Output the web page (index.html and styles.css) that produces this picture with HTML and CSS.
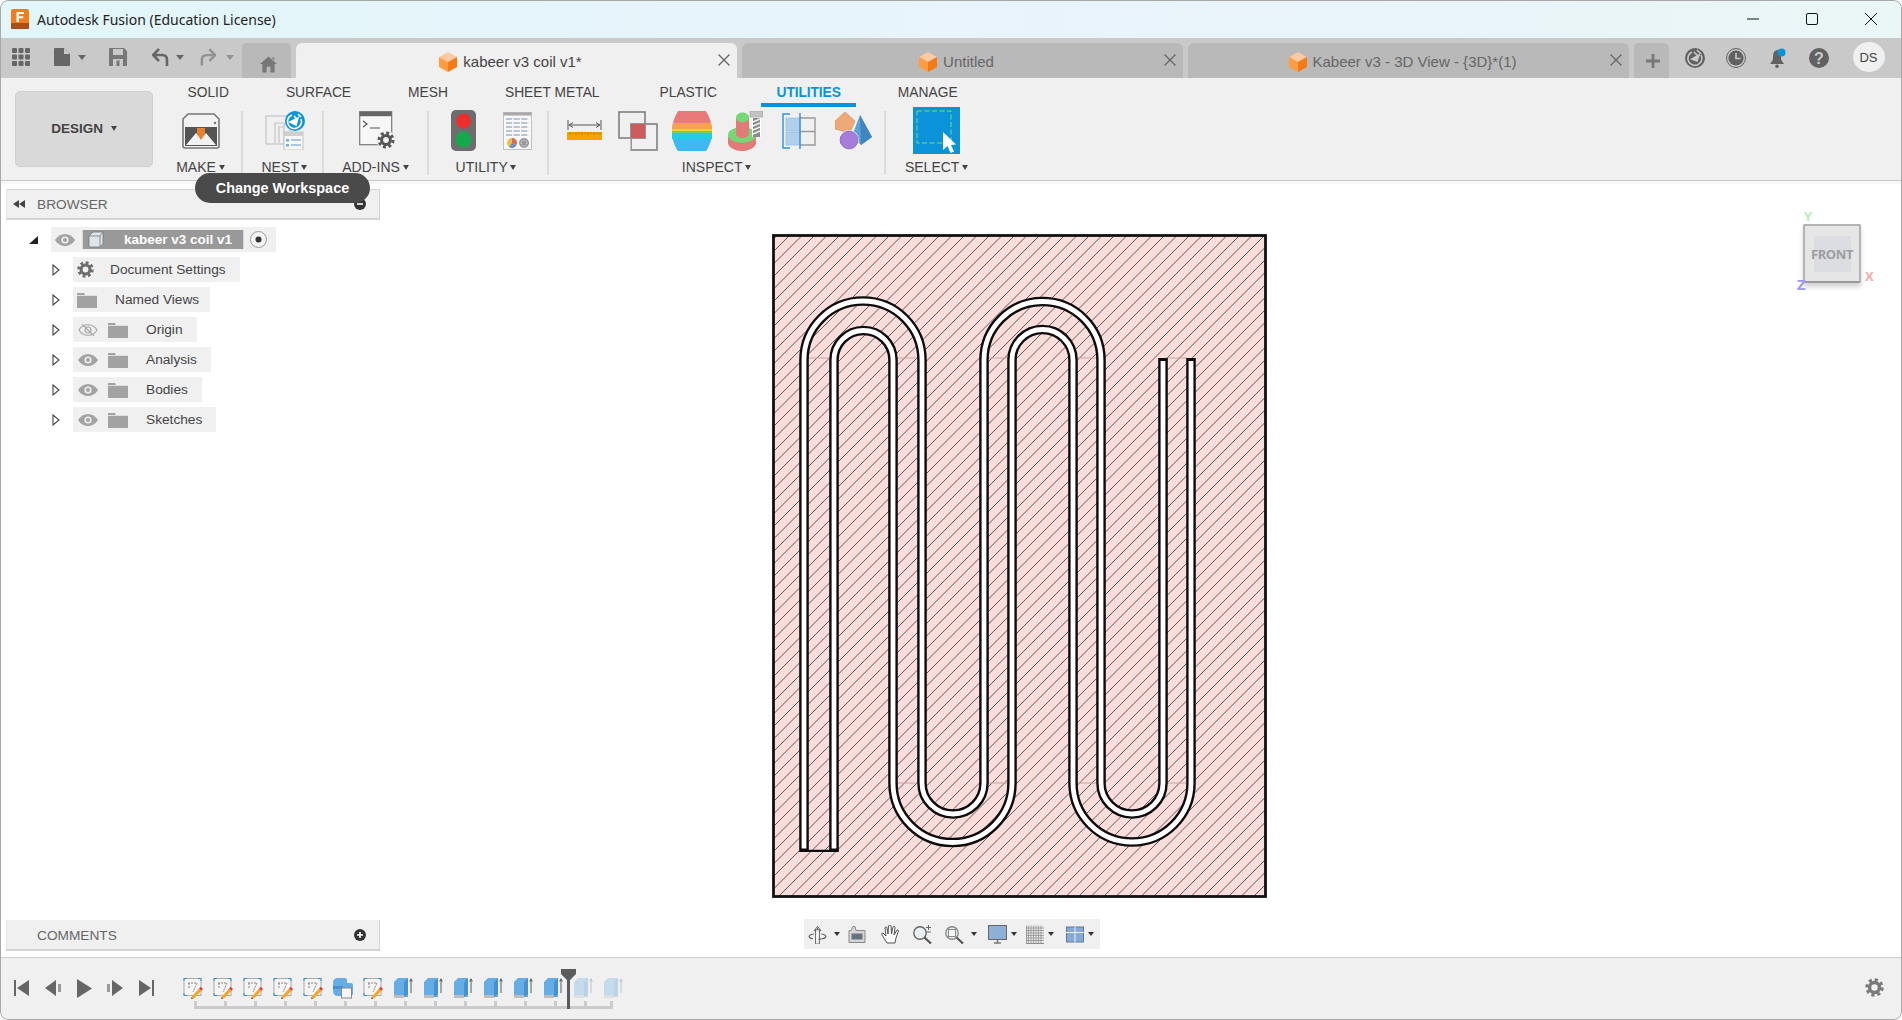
FILE: index.html
```html
<!DOCTYPE html>
<html lang="en">
<head>
<meta charset="utf-8">
<title>Autodesk Fusion</title>
<link rel="stylesheet" href="styles.css">
</head>
<body>
<svg class="defs" width="0" height="0" aria-hidden="true">
  <defs>
    <symbol id="cube" viewBox="0 0 18 20">
      <polygon points="9,0 18,5 9,10 0,5" fill="#fdc9a0"/>
      <polygon points="0,5 9,10 9,20 0,15" fill="#ff9d45"/>
      <polygon points="18,5 9,10 9,20 18,15" fill="#f57a14"/>
    </symbol>
    <symbol id="eye" viewBox="0 0 20 12">
      <path d="M0,6 C5,-2 15,-2 20,6 C15,14 5,14 0,6Z" fill="#a3a3a3"/>
      <circle cx="10" cy="6" r="3.6" fill="#f0f0f0"/>
      <circle cx="10" cy="6" r="2" fill="#a3a3a3"/>
    </symbol>
    <symbol id="eye-off" viewBox="0 0 20 12">
      <path d="M1,6 C5,-1 15,-1 19,6 C15,13 5,13 1,6Z" fill="none" stroke="#a8a8a8" stroke-width="1.2"/>
      <circle cx="10" cy="6" r="3" fill="none" stroke="#a8a8a8" stroke-width="1.2"/>
      <path d="M4,0 L16,12" stroke="#a8a8a8" stroke-width="1.2"/>
    </symbol>
    <symbol id="folder" viewBox="0 0 20 16">
      <path d="M0,1 H7 L8,3 H20 V16 H0Z" fill="#a2a2a2"/>
      <path d="M0,3.5 H20" stroke="#f0f0f0" stroke-width=".8"/>
    </symbol>
    <symbol id="expander" viewBox="0 0 8 12">
      <polygon points="1,1 7,6 1,11" fill="#fff" stroke="#444" stroke-width="1.1"/>
    </symbol>
    <symbol id="gear" viewBox="0 0 20 20">
      <circle cx="10" cy="10" r="5.2" fill="none" stroke="currentColor" stroke-width="3.6"/>
      <circle cx="10" cy="10" r="8" fill="none" stroke="currentColor" stroke-width="3.4" stroke-dasharray="3.3 2.98"/>
    </symbol>
    <symbol id="sketch" viewBox="0 0 20 22">
      <rect x="1" y="1.5" width="17" height="17" fill="#f5f5f5" stroke="#999" stroke-width=".8"/>
      <path d="M1,4 V1.5 H4 M15,1.5 H18 V4 M1,16 V18.5 H4" fill="none" stroke="#2c8fdc" stroke-width="1"/>
      <path d="M5,6 H14 L10,15 M6,6 V12" fill="none" stroke="#6a6a6a" stroke-width=".8" stroke-dasharray="2 1"/>
      <path d="M8.5,20 L16,11.5 L18.5,13.8 L11,21.5Z" fill="#f5a623"/>
      <path d="M16,11.5 L17.5,9.8 L20,12 L18.5,13.8Z" fill="#e8393a"/>
      <path d="M8.5,20 L8,22 L10.5,21.4Z" fill="#555"/>
    </symbol>
    <symbol id="extrude" viewBox="0 0 20 22">
      <path d="M1,5 L5,1 H15 V20 H1Z" fill="#66ade6"/>
      <path d="M11,5 L15,1 V17 L11,20Z" fill="#4492cf"/>
      <path d="M1,18 H11 V21 H1Z" fill="#bdbdbd"/>
      <path d="M18,16 V3 M16.7,4.5 L18,1.8 L19.3,4.5" fill="none" stroke="#333" stroke-width=".8"/>
    </symbol>
    <pattern id="hatch" patternUnits="userSpaceOnUse" width="25" height="25">
      <rect width="25" height="25" fill="#fddcdc"/>
      <path d="M-1,1 L1,-1 M-1,13.5 L13.5,-1 M-1,26 L26,-1 M11.5,26 L26,11.5 M24,26 L26,24" stroke="#4a4a4a" stroke-width=".9"/>
    </pattern>
  </defs>
</svg>

<div class="window">
  <header class="titlebar">
    <svg class="app-logo" viewBox="0 0 18 20">
      <rect width="18" height="20" rx="2" fill="#f47b20"/>
      <rect y="14" width="18" height="6" fill="#a6521a"/>
      <path d="M5.5,3 H13 V5 H8 V7.2 H12.3 V9.2 H8 V13 H5.5Z" fill="#fff"/>
    </svg>
    <span class="app-title">Autodesk Fusion (Education License)</span>
    <div class="win-controls">
      <svg class="win-btn" viewBox="0 0 12 12"><path d="M0,6 H12" stroke="#111" stroke-width="1"/></svg>
      <svg class="win-btn" viewBox="0 0 12 12"><rect x=".5" y=".5" width="11" height="11" rx="1.5" fill="none" stroke="#111" stroke-width="1"/></svg>
      <svg class="win-btn" viewBox="0 0 12 12"><path d="M0,0 L12,12 M12,0 L0,12" stroke="#111" stroke-width="1"/></svg>
    </div>
  </header>

  <nav class="tabbar">
    <div class="qat">
      <svg class="qi qi-grid" viewBox="0 0 18 18"><g fill="#666"><rect width="5" height="5" rx="1"/><rect x="6.5" width="5" height="5" rx="1"/><rect x="13" width="5" height="5" rx="1"/><rect y="6.5" width="5" height="5" rx="1"/><rect x="6.5" y="6.5" width="5" height="5" rx="1"/><rect x="13" y="6.5" width="5" height="5" rx="1"/><rect y="13" width="5" height="5" rx="1"/><rect x="6.5" y="13" width="5" height="5" rx="1"/><rect x="13" y="13" width="5" height="5" rx="1"/></g></svg>
      <svg class="qi qi-file" viewBox="0 0 16 18"><path d="M1,0 H10 L16,6 V17 Q16,18 15,18 H1 Q0,18 0,17 V1 Q0,0 1,0Z" fill="#666"/><path d="M10,0 V6 H16" fill="#c9c9c9"/></svg>
      <i class="caret caret-file"></i>
      <svg class="qi qi-save" viewBox="0 0 18 18"><path d="M1,0 H15 L18,3 V17 Q18,18 17,18 H1 Q0,18 0,17 V1 Q0,0 1,0Z" fill="#777"/><rect x="4" y="1" width="10" height="6" fill="#c9c9c9"/><rect x="4" y="11" width="10" height="7" fill="#c9c9c9"/><rect x="7.5" y="12.5" width="3" height="5.5" fill="#777"/></svg>
      <svg class="qi qi-undo" viewBox="0 0 17 18"><path d="M7,1 L1,7 L7,13 M2,7 H10 Q15,7 15,12 V18" fill="none" stroke="#666" stroke-width="2.6"/></svg>
      <i class="caret caret-undo"></i>
      <svg class="qi qi-redo" viewBox="0 0 17 18"><path d="M10,1 L16,7 L10,13 M15,7 H7 Q2,7 2,12 V18" fill="none" stroke="#929292" stroke-width="2.6"/></svg>
      <i class="caret caret-redo"></i>
    </div>
    <div class="home-tab">
      <svg class="home-icon" viewBox="0 0 18 17"><path d="M9,0 L18,8 H15.5 V17 H11 V11 H7 V17 H2.5 V8 H0Z M13,1 H15 V4 L13,2.5Z" fill="#787878"/></svg>
    </div>
    <div class="tab tab-active">
      <svg class="tab-cube"><use href="#cube"/></svg>
      <span class="tab-title">kabeer v3 coil v1*</span>
      <svg class="tab-close" viewBox="0 0 12 12"><path d="M0.5,0.5 L11.5,11.5 M11.5,0.5 L0.5,11.5" stroke="#666" stroke-width="1.3"/></svg>
    </div>
    <div class="tab">
      <svg class="tab-cube"><use href="#cube"/></svg>
      <span class="tab-title">Untitled</span>
      <svg class="tab-close" viewBox="0 0 12 12"><path d="M0.5,0.5 L11.5,11.5 M11.5,0.5 L0.5,11.5" stroke="#666" stroke-width="1.3"/></svg>
    </div>
    <div class="tab">
      <svg class="tab-cube"><use href="#cube"/></svg>
      <span class="tab-title">Kabeer v3 - 3D View - {3D}*(1)</span>
      <svg class="tab-close" viewBox="0 0 12 12"><path d="M0.5,0.5 L11.5,11.5 M11.5,0.5 L0.5,11.5" stroke="#666" stroke-width="1.3"/></svg>
    </div>
    <div class="plus-tab">
      <svg class="plus-icon" viewBox="0 0 14 14"><path d="M7,0 V14 M0,7 H14" stroke="#787878" stroke-width="2.8"/></svg>
    </div>
    <div class="tray">
      <svg class="tray-icon" viewBox="0 0 20 20"><circle cx="10" cy="10" r="10" fill="#616161"/><path d="M7,4 A7,7 0 1 0 16,7" fill="none" stroke="#c9c9c9" stroke-width="1.6"/><path d="M9,4 L13,8 M12,2 L16,6 M7,11 L14,7 L12,13 Z" fill="#c9c9c9" stroke="#c9c9c9" stroke-width="1.6"/></svg>
      <svg class="tray-icon" viewBox="0 0 20 20"><circle cx="10" cy="10" r="9.5" fill="none" stroke="#616161" stroke-width="1"/><circle cx="10" cy="10" r="7.6" fill="#616161"/><path d="M10,5 V10.5 H14.5" fill="none" stroke="#c9c9c9" stroke-width="1.6"/></svg>
      <svg class="tray-icon" viewBox="0 0 20 20"><path d="M9,2 C5,3 5,7 5,10 C5,13 3,14 2,16 H16 C15,14 13,13 13,10 C13,7 13,3 9,2Z" fill="#616161"/><circle cx="9" cy="18.2" r="1.8" fill="#616161"/><circle cx="13.5" cy="4.5" r="4" fill="#0696d7"/></svg>
      <svg class="tray-icon" viewBox="0 0 20 20"><circle cx="10" cy="10" r="10" fill="#616161"/><text x="10" y="16" text-anchor="middle" class="help-mark">?</text></svg>
      <span class="avatar">DS</span>
    </div>
  </nav>

  <section class="ribbon">
    <button class="design-btn">DESIGN <i class="caret caret-dark"></i></button>
    <div class="ribbon-main">
      <div class="ribbon-tabs">
        <span class="rtab">SOLID</span>
        <span class="rtab">SURFACE</span>
        <span class="rtab">MESH</span>
        <span class="rtab">SHEET METAL</span>
        <span class="rtab rtab-plastic">PLASTIC</span>
        <span class="rtab rtab-active">UTILITIES</span>
        <span class="rtab">MANAGE</span>
      </div>
      <div class="panels">
        <div class="panel panel-make">
          <div class="panel-icons">
            <svg class="ic-make" viewBox="0 0 38 36">
              <path d="M6,1 H32 L37,6 V33 Q37,35 35,35 H3 Q1,35 1,33 V6Z" fill="#f2f2f2" stroke="#777" stroke-width="1.6"/>
              <rect x="3" y="14" width="32" height="19" fill="#555"/>
              <circle cx="33" cy="10" r="1.3" fill="#777"/>
              <path d="M4,32 L14,20 L19,25 L24,20 L34,32Z" fill="#f2f2f2"/>
              <path d="M15,15 H23 V21 L19,27 L15,21Z" fill="#e9802d"/>
            </svg>
          </div>
          <span class="panel-label">MAKE <i class="caret caret-sm"></i></span>
        </div>
        <div class="panel panel-nest">
          <div class="panel-icons">
            <svg class="ic-nest" viewBox="0 0 40 39">
              <rect x="1" y="5" width="24" height="28" fill="#f0f0f0" stroke="#c4c4c4" stroke-width="1.2"/>
              <path d="M10,32 V12 H19 V32 M14,32 V16 H18" fill="none" stroke="#c4c4c4" stroke-width="1.2"/>
              <rect x="19" y="21" width="19" height="18" fill="#f7f7f7" stroke="#c4c4c4" stroke-width="1"/>
              <rect x="19" y="21" width="19" height="4" fill="#cfcfcf"/>
              <path d="M26,29 H36 M26,34 H36" stroke="#a9c8e4" stroke-width="2"/>
              <rect x="21" y="28" width="3" height="2.5" fill="#76b0dc"/><rect x="21" y="33" width="3" height="2.5" fill="#76b0dc"/>
              <circle cx="30" cy="10" r="10" fill="#0a94dc"/>
              <path d="M27,4 A7,7 0 1 0 36,8" fill="none" stroke="#fff" stroke-width="1.6"/>
              <path d="M25,11 L33,7 L31,14Z M29,5 L32,8 M33,3 L36,6" fill="#fff" stroke="#fff" stroke-width="1.6"/>
            </svg>
          </div>
          <span class="panel-label">NEST <i class="caret caret-sm"></i></span>
        </div>
        <div class="panel panel-addins">
          <div class="panel-icons">
            <svg class="ic-addins" viewBox="0 0 37 39">
              <rect x=".7" y=".7" width="32" height="33" fill="#f7f7f7" stroke="#7a7a7a" stroke-width="1.2"/>
              <rect x=".7" y=".7" width="32" height="4.5" fill="#666"/>
              <path d="M4,10 L8,13 L4,16 M11,17 H21" fill="none" stroke="#555" stroke-width="1.2"/>
              <circle cx="27" cy="29" r="9.5" fill="#f0f0f0"/>
              <circle cx="27" cy="29" r="4.4" fill="none" stroke="#555" stroke-width="3"/>
              <circle cx="27" cy="29" r="7" fill="none" stroke="#555" stroke-width="3" stroke-dasharray="2.9 2.6"/>
            </svg>
          </div>
          <span class="panel-label">ADD-INS <i class="caret caret-sm"></i></span>
        </div>
        <div class="panel panel-utility">
          <div class="panel-icons">
            <svg class="ic-traffic" viewBox="0 0 25 41">
              <rect width="25" height="41" rx="5" fill="#6d6d6d"/>
              <circle cx="12.5" cy="11" r="7.5" fill="#ee2d2d"/>
              <circle cx="12.5" cy="29.5" r="8" fill="#13a94c"/>
            </svg>
            <svg class="ic-table" viewBox="0 0 29 38">
              <rect x=".5" y=".5" width="28" height="37" fill="#f8f8f8" stroke="#c0c0c0"/>
              <rect x=".5" y=".5" width="28" height="3" fill="#a8a8a8"/>
              <path d="M3,7 H26 M3,11 H26 M3,15 H26 M3,19 H26 M3,23 H26" stroke="#b9c4d4" stroke-width="2.2" stroke-dasharray="6.2 1.4"/>
              <circle cx="9" cy="31" r="5" fill="#e8c14a"/>
              <path d="M9,31 V26 A5,5 0 0 1 13.5,33Z" fill="#d56b5f"/>
              <path d="M9,31 L13.5,33 A5,5 0 0 1 6,35Z" fill="#6c8fc8"/>
              <circle cx="21" cy="31" r="5" fill="#999"/>
              <circle cx="21" cy="31" r="3" fill="none" stroke="#eee" stroke-width="1" stroke-dasharray="1 1"/>
            </svg>
          </div>
          <span class="panel-label">UTILITY <i class="caret caret-sm"></i></span>
        </div>
        <div class="panel panel-inspect">
          <div class="panel-icons">
            <svg class="ic-ruler" viewBox="0 0 35 20">
              <path d="M1,0 V10 M34,0 V10" stroke="#555" stroke-width="1"/>
              <path d="M2,5 H33 M6,2.5 L2,5 L6,7.5 M29,2.5 L33,5 L29,7.5" fill="none" stroke="#555" stroke-width="1"/>
              <rect y="12" width="35" height="8" fill="#f5a300"/>
              <path d="M3,12 V15 M6,12 V14 M9,12 V15 M12,12 V14 M15,12 V15 M18,12 V14 M21,12 V15 M24,12 V14 M27,12 V15 M30,12 V14 M33,12 V15" stroke="#a87000" stroke-width=".8"/>
            </svg>
            <svg class="ic-combine" viewBox="0 0 40 40">
              <rect x="1" y="1" width="26" height="26" fill="none" stroke="#777" stroke-width="1.5"/>
              <rect x="13" y="13" width="26" height="26" fill="none" stroke="#8c8c8c" stroke-width="1.8"/>
              <rect x="13" y="13" width="14" height="14" fill="#cd5c5c"/>
              <rect x="11.5" y="27.5" width="1" height="12" fill="#f0f0f0"/>
            </svg>
            <svg class="ic-zebra" viewBox="0 0 40 40">
              <path d="M6,0 H34 Q40,10 40,20 Q40,30 34,40 H6 Q0,30 0,20 Q0,10 6,0Z" fill="#e97a7a"/>
              <path d="M1,12 H39 Q39.6,15 39.8,18 H.2 Q.4,15 1,12Z" fill="#f7a445"/>
              <rect y="18" width="40" height="2" fill="#e2d83a"/>
              <rect y="20" width="40" height="2" fill="#6fce6a"/>
              <rect y="22" width="40" height="6" fill="#1fd0e0"/>
              <path d="M.7,28 H39.3 Q38,34 34,40 H6 Q2,34 .7,28Z" fill="#3db9f5"/>
            </svg>
            <svg class="ic-drill" viewBox="0 0 35 40">
              <ellipse cx="14" cy="31" rx="14" ry="9" fill="#e27a78"/>
              <ellipse cx="14" cy="24" rx="14" ry="8" fill="#75d874"/>
              <path d="M0,24 V31 A14,9 0 0 0 28,31 V24 A14,8 0 0 1 0,24Z" fill="#e27a78"/>
              <path d="M8,6 V23 A6.5,4 0 0 0 21,23 V6Z" fill="#e27a78"/>
              <ellipse cx="14.5" cy="6.5" rx="6.5" ry="5" fill="#75d874"/>
              <rect x="24" y="5" width="9" height="21" fill="#fff"/>
              <rect x="25" y="7" width="7" height="19" fill="#8a8a8a"/>
              <path d="M25,11 L32,8 M25,15 L32,12 M25,19 L32,16 M25,23 L32,20" stroke="#eee" stroke-width="1.5"/>
              <rect x="22" y="0" width="13" height="6" fill="#c4c4c4" stroke="#999" stroke-width=".6"/>
            </svg>
            <svg class="ic-section" viewBox="0 0 34 36">
              <path d="M8,1 H1 V35 H8" fill="none" stroke="#2b92dc" stroke-width="1.4"/>
              <rect x="4" y="5" width="14" height="13" fill="#b0d0ec" stroke="#8db8dc" stroke-width=".6"/>
              <rect x="4" y="19" width="14" height="13" fill="#b0d0ec" stroke="#8db8dc" stroke-width=".6"/>
              <path d="M18,5 H33 V32 H18 M18,18.5 H33" fill="none" stroke="#999" stroke-width="1.4"/>
              <path d="M18,0 V36" stroke="#2b92dc" stroke-width="1.4"/>
            </svg>
            <svg class="ic-shapes" viewBox="0 0 37 38">
              <polygon points="10,0 20,9 15,21 0,17 0,9" fill="#edaa78" stroke="#cf8a58" stroke-width=".6"/>
              <polygon points="25,3 37,25 26,33 17,24" fill="#5ba2d8"/>
              <polygon points="25,3 37,25 26,33" fill="#4085bd"/>
              <circle cx="14" cy="28" r="10" fill="#fff"/>
              <circle cx="14" cy="28" r="9" fill="#a77ddc" stroke="#8a5eb8" stroke-width=".8"/>
            </svg>
          </div>
          <span class="panel-label">INSPECT <i class="caret caret-sm"></i></span>
        </div>
        <div class="panel panel-select">
          <div class="panel-icons">
            <svg class="ic-select" viewBox="0 0 47 47">
              <rect width="47" height="47" fill="#0a93d8"/>
              <rect x="4" y="4" width="34" height="32" fill="none" stroke="#7ddd7a" stroke-width="1" stroke-dasharray="5 2.5"/>
              <path d="M30,25 L30,43 L34.5,39 L37.5,46 L41,44.5 L38,38 L43,37.5Z" fill="#fff"/>
            </svg>
          </div>
          <span class="panel-label">SELECT <i class="caret caret-sm"></i></span>
        </div>
      </div>
    </div>
  </section>
  <div class="ribbon-gap"></div>

  <main class="viewport">
    <svg class="drawing" viewBox="0 184 1902 773">
      <rect x="773.5" y="235.5" width="492" height="661" fill="url(#hatch)" stroke="#111" stroke-width="2.8"/>
      <path d="M808,358 H830 M897,358 H917 M988,358 H1008 M1076,358 H1098 M1166,358 H1187 M898,783 H918 M988,783 H1008 M1076,783 H1096 M1167,783 H1187" stroke="#c6a4a4" stroke-width="1" fill="none"/>
      <g fill="none" stroke="#0c0c0c" stroke-width="9.6">
        <path d="M804,852 V360 A59,59 0 0 1 922,360 V783 A31,31 0 0 0 984,783 V360 A58.5,58.5 0 0 1 1101,360 V783 A31,31 0 0 0 1163,783 V358"/>
        <path d="M834,852 V360 A29.5,29.5 0 0 1 893,360 V783 A59.5,59.5 0 0 0 1012,783 V360 A30.5,30.5 0 0 1 1073,360 V783 A59,59 0 0 0 1191,783 V358"/>
      </g>
      <g fill="none" stroke="#fff" stroke-width="4.8">
        <path d="M804,848.5 V360 A59,59 0 0 1 922,360 V783 A31,31 0 0 0 984,783 V360 A58.5,58.5 0 0 1 1101,360 V783 A31,31 0 0 0 1163,783 V361"/>
        <path d="M834,848.5 V360 A29.5,29.5 0 0 1 893,360 V783 A59.5,59.5 0 0 0 1012,783 V360 A30.5,30.5 0 0 1 1073,360 V783 A59,59 0 0 0 1191,783 V361"/>
      </g>
      <path d="M800,850.8 H838" stroke="#0c0c0c" stroke-width="2.2"/>
    </svg>

    <aside class="side-panel browser">
      <div class="panel-head">
        <svg class="collapse" viewBox="0 0 12 8"><path d="M6,0 V8 L0,4Z M12,0 V8 L6,4Z" fill="#444"/></svg>
        <span class="head-title">BROWSER</span>
        <svg class="head-btn" viewBox="0 0 12 12"><circle cx="6" cy="6" r="6" fill="#333"/><path d="M3,6 H9" stroke="#fff" stroke-width="1.6"/></svg>
      </div>
      <div class="tree">
        <div class="tree-row row-root">
          <svg class="root-arrow" viewBox="0 0 9 8"><path d="M0,8 H9 V0Z" fill="#222"/></svg>
          <div class="pill pill-root">
            <svg class="eye"><use href="#eye"/></svg>
            <div class="root-name">
              <svg class="box-icon" viewBox="0 0 16 17"><path d="M1,5 L5,1 H15 V13 L12,16 H1Z" fill="#dfe3ea" stroke="#777" stroke-width=".8"/><path d="M1,5 H12 V16 M12,5 L15,1" fill="none" stroke="#777" stroke-width=".8"/></svg>
              <b class="root-text">kabeer v3 coil v1</b>
            </div>
            <svg class="radio" viewBox="0 0 17 17"><circle cx="8.5" cy="8.5" r="8" fill="#f4f4f4" stroke="#999"/><circle cx="8.5" cy="8.5" r="3" fill="#333"/></svg>
          </div>
        </div>
        <div class="tree-row">
          <svg class="expander"><use href="#expander"/></svg>
          <div class="pill">
            <svg class="gear-tree"><use href="#gear"/></svg>
            <span class="name name-doc">Document Settings</span>
          </div>
        </div>
        <div class="tree-row">
          <svg class="expander"><use href="#expander"/></svg>
          <div class="pill pill-views">
            <svg class="folder folder-first"><use href="#folder"/></svg>
            <span class="name name-views">Named Views</span>
          </div>
        </div>
        <div class="tree-row">
          <svg class="expander"><use href="#expander"/></svg>
          <div class="pill">
            <svg class="eye eye-item"><use href="#eye-off"/></svg>
            <svg class="folder"><use href="#folder"/></svg>
            <span class="name">Origin</span>
          </div>
        </div>
        <div class="tree-row">
          <svg class="expander"><use href="#expander"/></svg>
          <div class="pill">
            <svg class="eye eye-item"><use href="#eye"/></svg>
            <svg class="folder"><use href="#folder"/></svg>
            <span class="name">Analysis</span>
          </div>
        </div>
        <div class="tree-row">
          <svg class="expander"><use href="#expander"/></svg>
          <div class="pill">
            <svg class="eye eye-item"><use href="#eye"/></svg>
            <svg class="folder"><use href="#folder"/></svg>
            <span class="name">Bodies</span>
          </div>
        </div>
        <div class="tree-row">
          <svg class="expander"><use href="#expander"/></svg>
          <div class="pill">
            <svg class="eye eye-item"><use href="#eye"/></svg>
            <svg class="folder"><use href="#folder"/></svg>
            <span class="name">Sketches</span>
          </div>
        </div>
      </div>
    </aside>

    <div class="tooltip">Change Workspace</div>

    <aside class="side-panel comments">
      <div class="panel-head">
        <span class="head-title">COMMENTS</span>
        <svg class="head-btn" viewBox="0 0 12 12"><circle cx="6" cy="6" r="6" fill="#333"/><path d="M3,6 H9 M6,3 V9" stroke="#fff" stroke-width="1.6"/></svg>
      </div>
    </aside>

    <div class="viewcube">
      <span class="axis axis-y">Y</span>
      <span class="axis axis-x">X</span>
      <span class="axis axis-z">Z</span>
      <div class="cube-face"><span class="cube-label">FRONT</span></div>
    </div>

    <div class="navbar">
      <svg class="nav-ic ic-orbit" viewBox="0 0 20 20"><path d="M10,20 V3 M6.5,6 L10,1.5 L13.5,6Z" fill="#f4f4f4" stroke="#555" stroke-width="1"/><rect x="8" y="5" width="4" height="15" fill="#f4f4f4" stroke="#555" stroke-width=".9"/><path d="M6,9.5 C0,10.5 -0.5,13.5 5,14.5 M14,9.5 C20,10.5 20.5,13.5 15,14.5 L11,15" fill="none" stroke="#555" stroke-width="1.2"/></svg>
      <i class="caret caret-nav"></i>
      <svg class="nav-ic ic-look" viewBox="0 0 18 18"><path d="M1,5 L3,5 L5,1 H7 L8,5 H17 V17 H1Z" fill="#d6d6d6" stroke="#888" stroke-width="1"/><rect x="3.5" y="8" width="11" height="6" fill="#66727f"/></svg>
      <svg class="nav-ic ic-hand" viewBox="0 0 19 19"><path d="M6,18 L1,10 Q0,8 2,8 L5,11 L4,3 Q4,2 5,2 Q6,2 6,3 L7,9 L7.5,1 Q8,0 9,0 Q10,0 10,1 L10.5,9 L12,2 Q12.5,1 13.5,1.5 Q14,2 14,3 L13,10 L16,5 Q17,4.5 17.5,5.5 L15,13 L14,18Z" fill="#fafafa" stroke="#555" stroke-width="1"/></svg>
      <svg class="nav-ic ic-zoom" viewBox="0 0 19 19"><circle cx="7" cy="8" r="6.2" fill="#eaf1f5" stroke="#666" stroke-width="1.4"/><path d="M11.5,12.5 L18,18.5" stroke="#555" stroke-width="2.2"/><path d="M13,2.5 H18 M15.5,0 V5 M13,7 H18" stroke="#666" stroke-width="1"/></svg>
      <svg class="nav-ic ic-fit" viewBox="0 0 19 19"><circle cx="7" cy="8" r="6.2" fill="#eaf1f5" stroke="#888" stroke-width="1.4"/><rect x="3.5" y="4.5" width="7" height="7" fill="#f8f8f8" stroke="#888"/><path d="M11.5,12.5 L18,18.5" stroke="#555" stroke-width="2.2"/></svg>
      <i class="caret caret-nav"></i>
      <svg class="nav-ic ic-display" viewBox="0 0 19 19"><rect x=".5" y=".5" width="18" height="14" fill="#8fb0d6" stroke="#666"/><path d="M6,18 H13 M9.5,15 V18" stroke="#777" stroke-width="1.5"/></svg>
      <i class="caret caret-nav caret-tight"></i>
      <svg class="nav-ic ic-gridview" viewBox="0 0 18 18"><rect width="18" height="18" fill="#e6e6e6"/><path d="M2.5,0 V18 M5,0 V18 M7.5,0 V18 M10,0 V18 M12.5,0 V18 M15,0 V18 M0,2.5 H18 M0,5 H18 M0,7.5 H18 M0,10 H18 M0,12.5 H18 M0,15 H18" stroke="#6f6f6f" stroke-width=".5"/><path d="M.3,0 V18 H18" fill="none" stroke="#777" stroke-width=".8"/></svg>
      <i class="caret caret-nav caret-tight"></i>
      <svg class="nav-ic ic-views" viewBox="0 0 18 16"><rect x=".5" y=".5" width="17" height="15" fill="#86a9d6" stroke="#5f7a9e"/><path d="M9,0 V16 M0,6 H18" stroke="#f0f0f0" stroke-width="1"/></svg>
      <i class="caret caret-nav caret-tight"></i>
    </div>
  </main>

  <footer class="timeline">
    <div class="playback">
      <svg class="pb pb-first" viewBox="0 0 15 16"><rect width="2" height="16" fill="#666"/><path d="M15,0 V16 L3,8Z" fill="#666"/></svg>
      <svg class="pb pb-prev" viewBox="0 0 17 16"><path d="M11,0 V16 L0,8Z" fill="#666"/><rect x="13" y="4" width="3" height="8" fill="#999"/></svg>
      <svg class="pb pb-play" viewBox="0 0 15 19"><path d="M0,0 V19 L15,9.5Z" fill="#666"/></svg>
      <svg class="pb pb-next" viewBox="0 0 17 16"><rect x="1" y="4" width="3" height="8" fill="#999"/><path d="M6,0 V16 L17,8Z" fill="#666"/></svg>
      <svg class="pb pb-last" viewBox="0 0 15 16"><path d="M0,0 V16 L12,8Z" fill="#666"/><rect x="13" width="2" height="16" fill="#666"/></svg>
    </div>
    <div class="track">
      <div class="features">
        <svg class="feat"><use href="#sketch"/></svg>
        <svg class="feat"><use href="#sketch"/></svg>
        <svg class="feat"><use href="#sketch"/></svg>
        <svg class="feat"><use href="#sketch"/></svg>
        <svg class="feat"><use href="#sketch"/></svg>
        <svg class="feat" viewBox="0 0 20 22"><path d="M0,6 Q0,1 5,1 H12 Q14,1 14,4 V6 H18 Q20,6 20,9 V16 Q20,19 17,19 H5 Q0,19 0,13Z" fill="#66ade6"/><path d="M0,9 H10 V12 H0Z" fill="#4492cf"/><rect x="8.5" y="11" width="10" height="10" fill="#f7f7f7" stroke="#888" stroke-width="1"/></svg>
        <svg class="feat"><use href="#sketch"/></svg>
        <svg class="feat"><use href="#extrude"/></svg>
        <svg class="feat"><use href="#extrude"/></svg>
        <svg class="feat"><use href="#extrude"/></svg>
        <svg class="feat"><use href="#extrude"/></svg>
        <svg class="feat"><use href="#extrude"/></svg>
        <svg class="feat"><use href="#extrude"/></svg>
        <svg class="feat feat-off"><use href="#extrude"/></svg>
        <svg class="feat feat-off"><use href="#extrude"/></svg>
      </div>
      <div class="ruler"></div>
      <svg class="marker" viewBox="0 0 15 40"><path d="M0,0 H15 V5 L9,11 V40 H6 V11 L0,5Z" fill="#5c5c5c"/></svg>
    </div>
    <svg class="tl-gear"><use href="#gear"/></svg>
  </footer>
</div>
</body>
</html>
```

FILE: styles.css
```css
* { box-sizing: border-box; }
html, body { margin: 0; height: 100%; overflow: hidden; background: #fff; }
body { font-family: "Liberation Sans", Arial, sans-serif; color: #444; }
.defs { position: absolute; }
i { display: inline-block; }

.window { position: relative; width: 1902px; height: 1020px; display: flex; flex-direction: column; overflow: hidden; border-radius: 8px; background: #fff; }
.window::after { content: ""; position: absolute; inset: 0; border: 1px solid #a8a8a8; border-radius: 8px; pointer-events: none; }

.titlebar { height: 38px; display: flex; align-items: center; padding: 0 25px 0 11px; background: linear-gradient(90deg, #e2f6f9, #e9f3fb 55%, #ebf6f7); }
.app-logo { width: 18px; height: 20px; }
.app-title { margin-left: 8px; font: 14px "Noto Sans", sans-serif; color: #222; }
.win-controls { margin-left: auto; display: flex; gap: 47px; }
.win-btn { width: 12px; height: 12px; }

.caret { width: 0; height: 0; border-left: 4px solid transparent; border-right: 4px solid transparent; border-top: 5px solid #666; }
.caret-redo { border-top-color: #929292; margin-left: 10px; }
.caret-file { margin-left: 8px; }
.caret-undo { margin-left: 7px; }

.tabbar { height: 40px; display: flex; align-items: flex-end; background: #c9c9c9; }
.qat { width: 242px; height: 40px; display: flex; align-items: center; padding: 0 0 2px 12px; align-self: flex-end; }
.qi { height: 18px; }
.qi-grid { width: 18px; }
.qi-file { width: 16px; margin-left: 24px; }
.qi-save { width: 18px; margin-left: 23px; }
.qi-undo { width: 17px; margin-left: 25px; }
.qi-redo { width: 16px; margin-left: 16px; }
.home-tab { width: 49px; height: 35px; display: flex; align-items: center; justify-content: center; background: #b9b9b9; border-radius: 5px 5px 0 0; margin-right: 5px; }
.home-icon { width: 17px; height: 17px; margin: 8px 0 0 4px; }
.tab { width: 441px; height: 35px; margin-right: 5px; padding: 2px 7px 0; display: flex; align-items: center; background: #b9b9b9; border-radius: 6px 6px 0 0; font-size: 15px; color: #666; }
.tab-active { background: #f0f0f0; color: #444; }
.tab-cube { width: 18px; height: 20px; margin-left: auto; flex: none; }
.tab-title { margin: 0 auto 0 6px; white-space: nowrap; }
.tab-close { width: 12px; height: 12px; flex: none; margin-bottom: 3px; }
.plus-tab { width: 35px; height: 35px; display: flex; align-items: center; justify-content: center; background: #b9b9b9; border-radius: 5px 5px 0 0; }
.plus-icon { width: 14px; height: 14px; margin-left: 2px; }
.tray { display: flex; align-items: center; height: 40px; padding-left: 15.5px; gap: 21.5px; padding-bottom: 1px; }
.tray-icon { width: 20px; height: 20px; }
.help-mark { font: bold 16px "Liberation Sans", sans-serif; fill: #c9c9c9; }
.avatar { width: 32px; height: 30px; margin: 0 0 1px 2px; border-radius: 50%; background: #f0f0f0; display: flex; align-items: center; justify-content: center; font-size: 13px; color: #444; }

.ribbon { height: 103px; display: flex; background: #f0f0f0; border-bottom: 1px solid #c9c9c9; }
.ribbon-gap { height: 3px; background: #f7f7f7; }
.design-btn { width: 138px; height: 76px; margin: 13px 7px 0 15px; flex: none; padding-bottom: 3px; background: #d9d9d9; border: 1px solid #cfcfcf; border-radius: 5px; font: bold 13.5px "Liberation Sans", sans-serif; color: #444; }
.caret-dark { border-top-color: #444; margin-left: 4px; vertical-align: 2px; border-left-width: 3.5px; border-right-width: 3.5px; }
.ribbon-main { flex: 1; display: flex; flex-direction: column; }
.ribbon-tabs { height: 29px; display: flex; align-items: center; padding: 0 0 1px 0; font-size: 13.8px; margin-left: -1px; }
.rtab { padding: 0 28.5px; position: relative; white-space: nowrap; }
.rtab-plastic { margin-left: 3px; }
.rtab-active { color: #0696d7; font-weight: bold; letter-spacing: -.1px; margin-left: 2.5px; }
.rtab-active::after { content: ""; position: absolute; left: 13px; right: 13px; bottom: -7px; height: 4px; background: #0696d7; }
.panels { flex: 1; display: flex; }
.panel { display: flex; flex-direction: column; align-items: center; border-right: 2px solid #dcdcdc; height: 64px; margin-top: 4px; }
.panel-icons { height: 43px; flex: none; display: flex; align-items: center; justify-content: center; margin-top: -2px; }
.panel-label { margin-top: 6px; font-size: 14px; line-height: 18px; white-space: nowrap; }
.panel-make { width: 83px; }
.panel-nest { width: 81px; padding-left: 4px; }
.panel-addins { width: 105px; }
.panel-addins .panel-icons { padding-left: 4px; }
.panel-utility { width: 120px; }
.panel-utility .panel-icons { padding-left: 7px; }
.panel-utility .panel-label { margin-left: -4px; }
.panel-inspect { width: 337px; }
.panel-inspect .panel-icons { padding-left: 6px; }
.panel-select { width: 103px; border-right: none; padding-right: 2px; }
.caret-sm { border-left-width: 3.5px; border-right-width: 3.5px; border-top-color: #444; margin-left: -1px; vertical-align: 2px; }
.ic-make { width: 38px; height: 36px; }
.ic-nest { width: 40px; height: 39px; }
.ic-addins { width: 37px; height: 39px; }
.ic-traffic { width: 25px; height: 41px; }
.ic-table { width: 29px; height: 38px; margin-left: 27px; }
.ic-ruler { width: 35px; height: 20px; margin-top: -2px; }
.ic-combine { width: 40px; height: 40px; margin-left: 16px; }
.ic-zebra { width: 40px; height: 40px; margin-left: 14px; }
.ic-drill { width: 35px; height: 40px; margin-left: 16px; }
.ic-section { width: 34px; height: 36px; margin-left: 19px; }
.ic-shapes { width: 37px; height: 38px; margin-left: 19px; }
.ic-select { width: 47px; height: 47px; flex: none; }

.viewport { flex: 1; position: relative; background: #fff; }
.drawing { position: absolute; inset: 0; width: 1902px; height: 773px; }
.side-panel { position: absolute; left: 6px; width: 374px; font-size: 13.7px; }
.browser { top: 5px; }
.comments { top: 736px; }
.panel-head { height: 31px; display: flex; align-items: center; padding-left: 6px; background: #f0f0f0; border: 1px solid #d4d4d4; border-bottom-width: 2px; border-left-color: #e4e4e4; color: #666; }
.comments .panel-head { padding: 1px 0 0 30px; border-top: none; }
.collapse { width: 12px; height: 8px; margin-right: 12px; }
.head-title { flex: 1; }
.head-btn { width: 12px; height: 12px; margin-right: 13px; }
.tree { margin-top: 7px; display: flex; flex-direction: column; gap: 5px; }
.tree-row { height: 25px; display: flex; align-items: center; padding-left: 46px; }
.row-root { padding-left: 23px; }
.root-arrow { width: 9px; height: 8px; margin-right: 13px; }
.expander { width: 8px; height: 12px; margin-right: 13px; }
.pill { height: 25px; display: flex; align-items: center; background: #f0f0f0; padding-right: 14px; }
.pill-root { padding: 0 9px 0 4px; }
.pill-views { padding-right: 11px; }
.eye { width: 20px; height: 12px; }
.eye-item { margin-left: 5px; margin-right: 10px; width: 20px; }
.root-name { display: flex; align-items: center; height: 19px; margin: 0 6px 0 7px; background: #999; border: 1px solid #d8d8d8; border-top: none; border-bottom: none; padding-left: 5px; width: 162px; }
.box-icon { width: 16px; height: 17px; }
.root-text { margin-left: 20px; color: #fff; font-size: 13.5px; white-space: nowrap; }
.radio { width: 17px; height: 17px; }
.gear-tree { width: 17px; height: 17px; margin-left: 4px; color: #6d6d6d; }
.folder { width: 20px; height: 16px; }
.folder-first { margin-left: 4px; }
.name { margin: 0 0 1px 18px; font-size: 13.7px; color: #444; white-space: nowrap; }
.name-doc { margin-left: 16px; }
.name-views { margin-left: 18px; }

.tooltip { position: absolute; left: 195px; top: -11px; width: 175px; height: 30px; border-radius: 15px; background: #4a4a4a; color: #fff; font: bold 14.4px "Liberation Sans", sans-serif; display: flex; align-items: center; justify-content: center; z-index: 2; }

.viewcube { position: absolute; left: 1803px; top: 40px; }
.cube-face { width: 58px; height: 59px; display: flex; align-items: center; justify-content: center; background: #e6e6e6; border: 2px solid #b4b4b4; border-bottom-color: #999; border-radius: 2px; box-shadow: 0 4px 5px rgba(0,0,0,.18); }
.cube-label { width: 37px; text-align: center; background: #dcdde0; color: #9b9ea3; font: bold 13px/36px "Open Sans", sans-serif; letter-spacing: -.4px; display: flex; justify-content: center; }
.axis { position: absolute; font: bold 13px "Open Sans", sans-serif; }
.axis-y { left: 1px; top: -17px; color: #b3f0b3; }
.axis-x { left: 62px; top: 43px; color: #f9aaaa; }
.axis-z { left: -6px; top: 50px; color: #9a9af0; font-size: 15px; }

.navbar { position: absolute; left: 804px; top: 735px; width: 296px; height: 30px; background: #f0f0f0; display: flex; align-items: center; padding-left: 4px; }
.nav-ic { height: 19px; flex: none; }
.ic-orbit { width: 19px; }
.caret-nav { border-left-width: 3.5px; border-right-width: 3.5px; border-top-color: #333; border-top-width: 4.5px; margin-left: 7px; }
.caret-tight { margin-left: 4px; }
.ic-look { width: 18px; margin-left: 8px; }
.ic-hand { width: 19px; margin-left: 15px; }
.ic-zoom { width: 19px; margin-left: 13px; }
.ic-fit { width: 19px; margin-left: 13px; }
.ic-display { width: 19px; margin-left: 11px; }
.ic-gridview { width: 18px; margin-left: 9px; }
.ic-views { width: 18px; margin-left: 11.5px; }

.timeline { height: 63px; display: flex; align-items: flex-start; background: #f0f0f0; border-top: 1px solid #cfcfcf; position: relative; }
.playback { display: flex; align-items: center; padding: 20px 0 0 14px; height: 40px; }
.pb { flex: none; }
.pb-first { width: 15px; height: 16px; }
.pb-prev { width: 17px; height: 16px; margin-left: 16px; }
.pb-play { width: 15px; height: 19px; margin-left: 15px; }
.pb-next { width: 17px; height: 16px; margin-left: 14px; }
.pb-last { width: 15px; height: 16px; margin-left: 16px; }
.track { position: relative; margin-left: 29px; width: 440px; padding-top: 19px; }
.features { display: flex; gap: 10px; }
.feat { width: 20px; height: 22px; flex: none; }
.feat-off { opacity: .3; }
.ruler { height: 8px; width: 419px; margin: 2px 0 0 11px; border-bottom: 3px solid #cbcbcb; background: repeating-linear-gradient(90deg, #cbcbcb 0 3px, transparent 3px 30px); box-shadow: inset -3px 0 0 #cbcbcb; }
.marker { position: absolute; left: 378px; top: 11px; width: 15px; height: 40px; }
.tl-gear { position: absolute; right: 18px; top: 20px; width: 19px; height: 19px; color: #7a7a7a; }
```
